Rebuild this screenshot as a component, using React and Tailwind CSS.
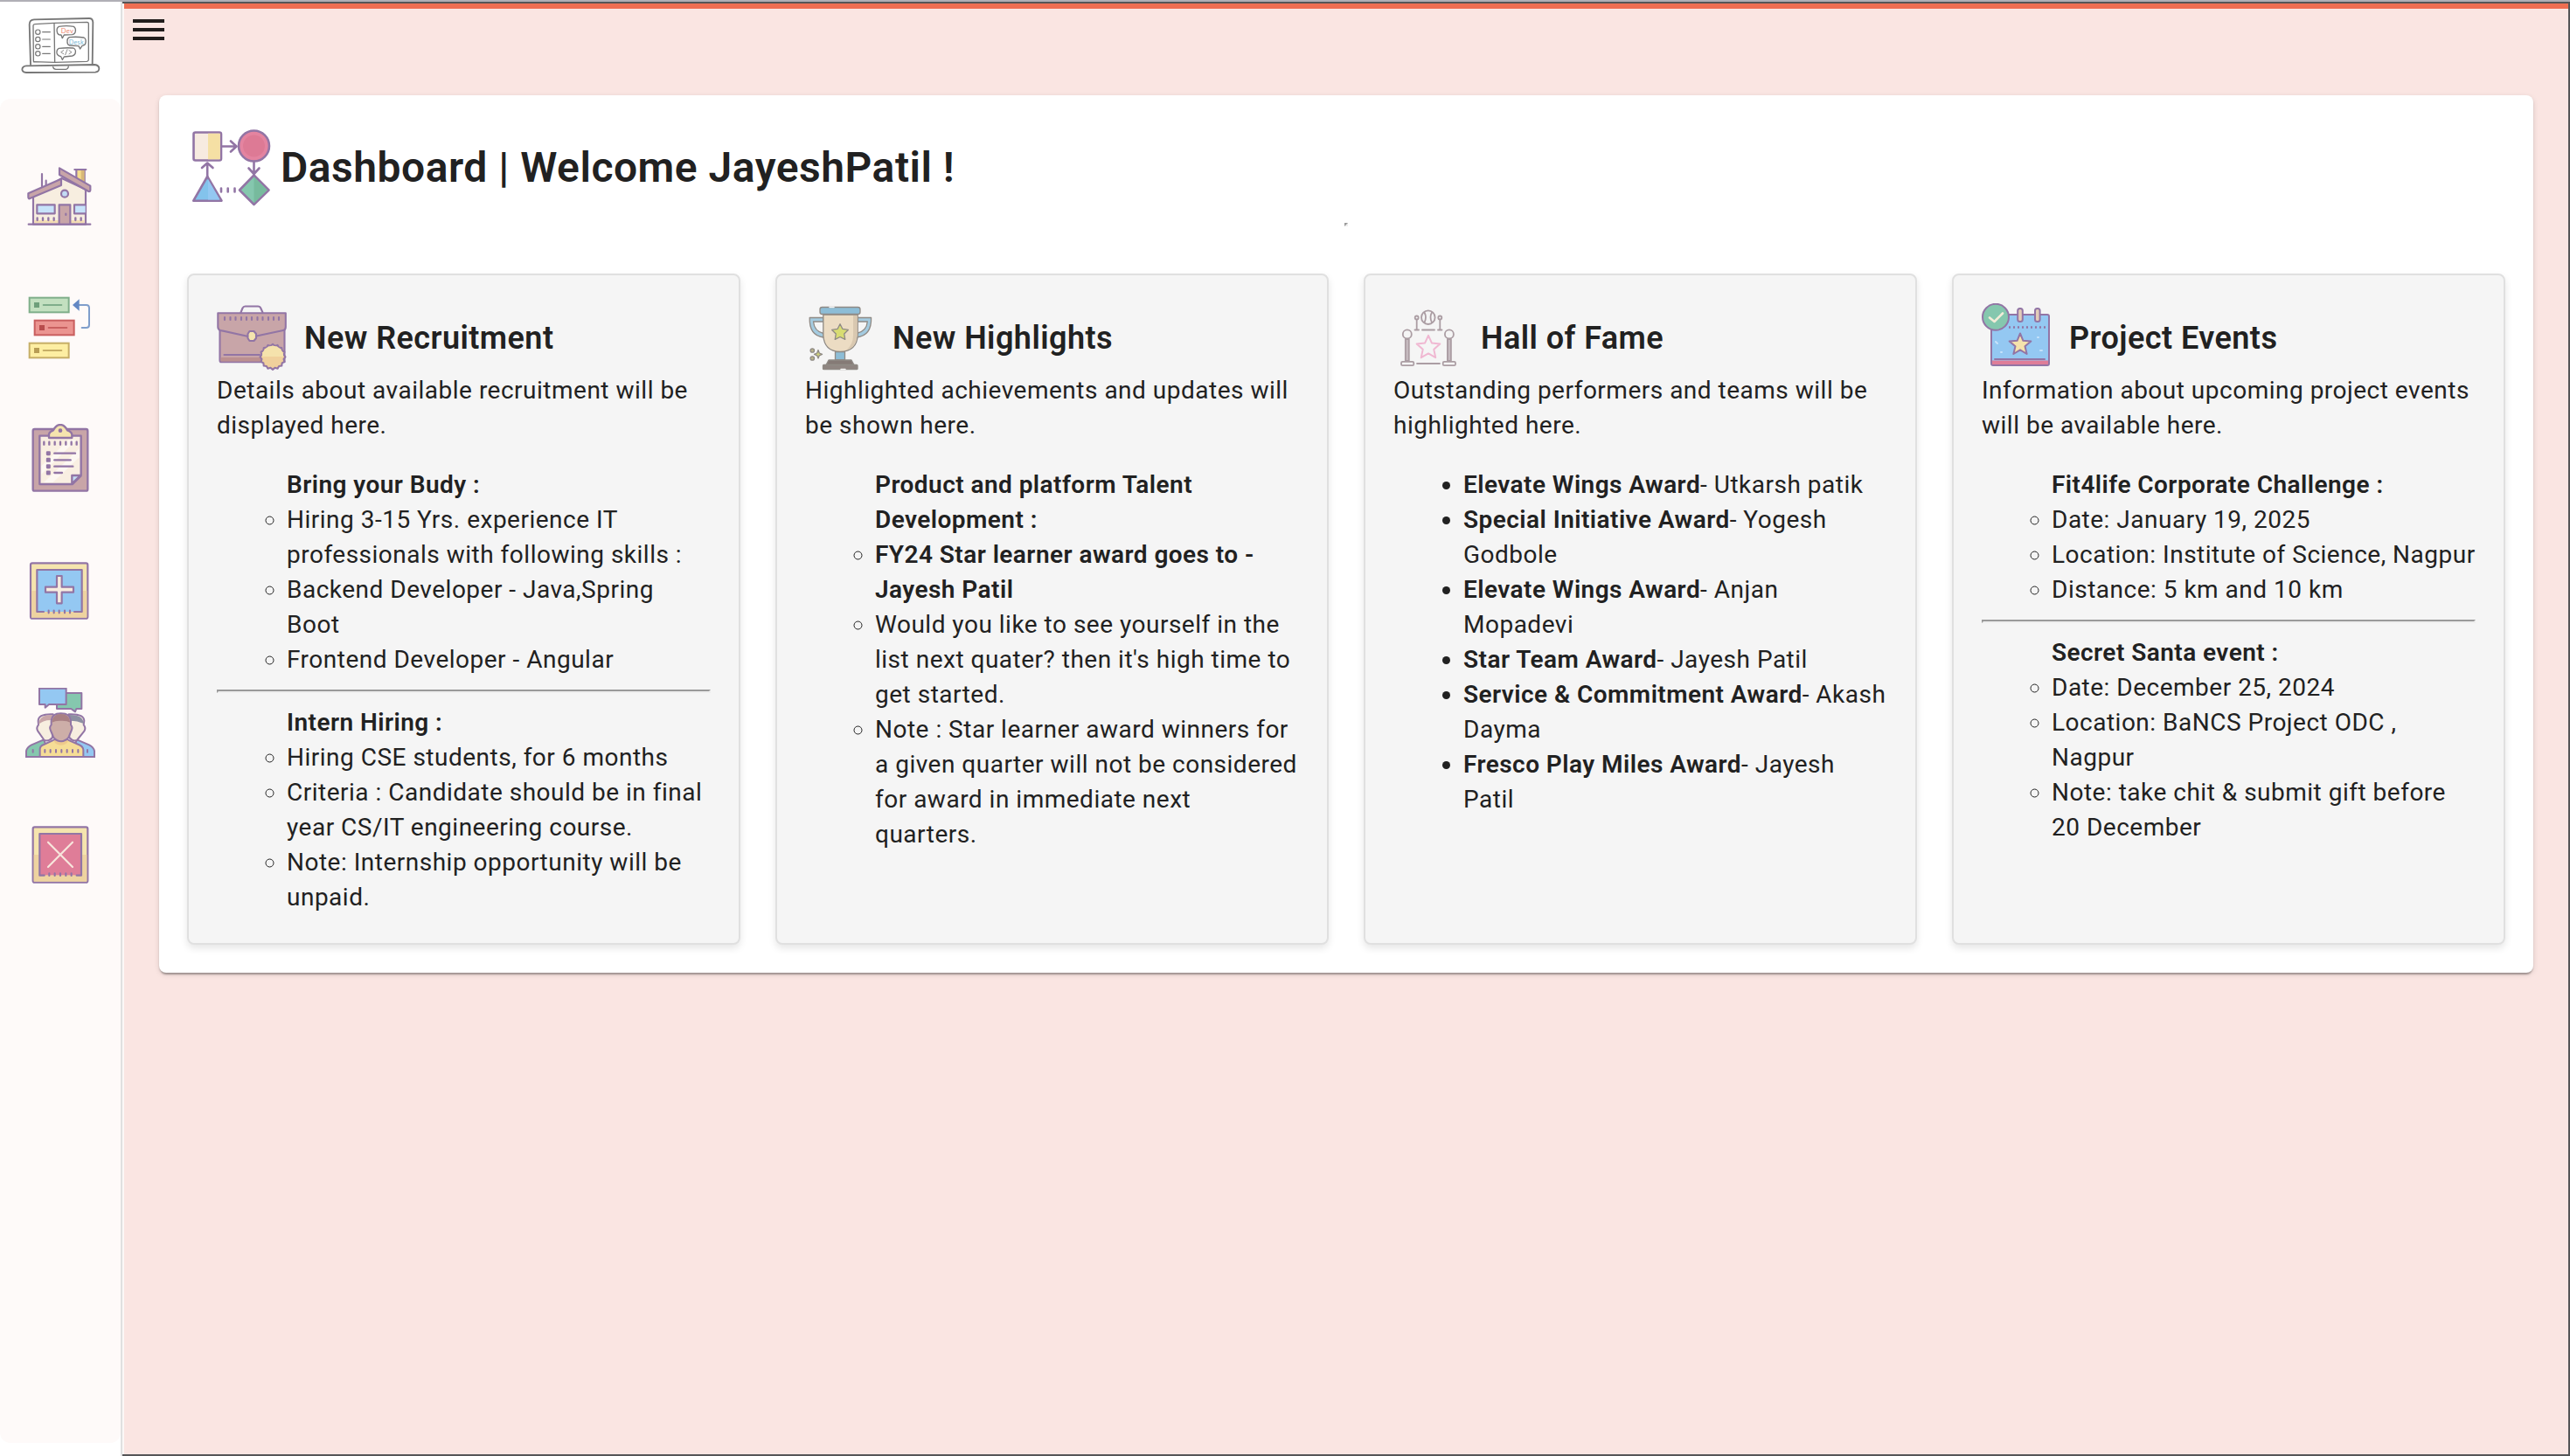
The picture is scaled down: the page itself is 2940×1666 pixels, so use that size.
import React from "react";

const P = "#9275a5";

function starPoints(cx, cy, R, r) {
  return Array.from({ length: 10 }, (_, i) => {
    const a = -Math.PI / 2 + (i * Math.PI) / 5;
    const d = i % 2 ? r : R;
    return `${(cx + d * Math.cos(a)).toFixed(2)},${(cy + d * Math.sin(a)).toFixed(2)}`;
  }).join(" ");
}

function Logo() {
  return (
    <svg viewBox="66 51 285 210" className="h-[70px] w-[95px]" fill="none" stroke="#777" strokeWidth="5.5" strokeLinejoin="round" strokeLinecap="round">
      <path d="M105 222 L101 84 Q101 68 117 67 L306 63 Q318 63 319 76 L317 222" />
      <path d="M117 212 Q115 214 115 208 L114 88 Q114 84 120 83 L186 79 L299 76 Q304 76 304 82 V205 Q304 210 298 211 L188 214 Z" strokeWidth="4" />
      <path d="M186 80 L188 213" strokeWidth="4" />
      <path d="M90 226 L325 222 Q340 224 340 235 Q340 247 327 248 L90 249 Q76 248 76 238 Q77 227 90 226 Z" />
      <path d="M182 230 Q184 238 192 238 H226 Q234 237 235 228" strokeWidth="4" />
      {[110, 135, 160, 184].map((y) => (
        <g key={y} strokeWidth="3.5">
          <circle cx="130" cy={y} r="8" />
          <path d={`M146 ${y} H172`} />
        </g>
      ))}
      <g strokeWidth="4">
        <path d="M202 91 Q228 87 253 91 Q261 97 259 108 Q257 118 248 119 L220 120 L214 131 L210 120 Q198 121 196 110 Q193 96 202 91 Z" />
        <path d="M238 128 Q262 125 288 129 Q296 133 294 146 Q293 156 282 157 L275 168 L270 158 L238 156 Q230 152 231 142 Q230 132 238 128 Z" />
        <path d="M202 166 Q228 163 252 165 Q261 170 259 180 Q258 190 248 192 L220 195 L214 205 L209 194 Q197 192 195 182 Q194 170 202 166 Z" />
        <path d="M218 173 L209 179 L218 185 M237 173 L246 179 L237 185 M231 170 L224 188" strokeWidth="2.5" />
      </g>
      <text x="209" y="114" fontSize="23" fill="#ef8a72" stroke="none" fontFamily="Lato, sans-serif" textLength="43" letterSpacing="0">Dev</text>
      <text x="236" y="152" fontSize="22" fill="#7db9d6" stroke="none" fontFamily="Lato, sans-serif" textLength="51" letterSpacing="0">Desk</text>
    </svg>
  );
}

const navCls = "block size-20";

function House() {
  return (
    <svg viewBox="87 549 240 240" className={navCls} stroke={P} strokeWidth="6.5" strokeLinejoin="round" strokeLinecap="round" fill="none">
      <path d="M144 597 V640 M158 620 V636" />
      <path d="M262 582 H290 V634 L262 614 Z" fill="#f5dc8c" />
      <path d="M278 582 H290 V632 L278 624 Z" fill="#d8b878" stroke="none" />
      <path d="M256 582 H295" />
      <path d="M114 672 L212 612 L294 650 V770 H114 Z" fill="#f7eee0" />
      <path d="M118 756 H290 V766 H118 Z" fill="#f3dcb4" stroke="none" />
      <path d="M97 664 L210 614 V636 L101 682 Q97 682 97 676 Z" fill="#c8a5a8" />
      <path d="M204 577 L310 638 V653 Q309 658 304 657 L204 600 Z" fill="#c8a5a8" />
      <circle cx="222" cy="665" r="12" fill="#c3dcf5" />
      <rect x="127" y="703" width="61" height="30" fill="#c7e3fa" />
      <path d="M293 703 H255 V733 H293" fill="#c7e3fa" />
      <path d="M203 768 V703 H241 V768" fill="#c8a5a8" />
      <path d="M226 734 V738" />
      <path d="M128 748 V756 M147 748 V756 M166 748 V756 M185 748 V756 M259 748 V756 M278 748 V756" strokeWidth="7" />
      <path d="M98 770 H310" />
    </svg>
  );
}

function TaskFlow() {
  const rows = [
    [101, 122, "#c3e0c0", "#7fae8a", "#6e9f7a"],
    [119, 200, "#eb9490", "#c95f5f", "#b84c4c"],
    [101, 278, "#fdeea2", "#c6ae66", "#b89d55"],
  ];
  return (
    <svg viewBox="87 102 240 240" className={navCls} fill="none">
      {rows.map(([x, y, f, s, d]) => (
        <g key={y}>
          <rect x={x} y={y} width="135" height="50" fill={f} stroke={s} strokeWidth="6" />
          <rect x={x + 16} y={y + 16} width="18" height="18" fill={d} />
          <path d={`M${x + 48} ${y + 25} H${x + 110}`} stroke={s} strokeWidth="6" strokeLinecap="round" />
        </g>
      ))}
      <path d="M270 147 H296 Q306 147 306 157 V215 Q306 225 296 225 H281" stroke="#7f9ecb" strokeWidth="6" strokeLinecap="round" />
      <path d="M272 127 V167 L249 147 Z" fill="#6488c4" />
    </svg>
  );
}

function Clipboard() {
  return (
    <svg viewBox="87 555 240 240" className={navCls} stroke={P} strokeWidth="7" strokeLinejoin="round" strokeLinecap="round" fill="none">
      <rect x="113" y="573" width="188" height="212" rx="6" fill="#c8a5a8" />
      <path d="M136 596 H278 V733 L249 762 H136 Z" fill="#f9efe2" />
      <path d="M142 700 L235 610 H262 L142 728 Z M150 756 L272 640 V670 L182 756 Z" fill="#fdf8f2" stroke="none" />
      <path d="M247 760 V732 H276 Z" fill="#c3dcf5" />
      <path d="M168 603 V590 Q170 582 183 577 Q192 558 207 558 Q222 558 231 577 Q246 582 247 592 V603 Z" fill="#f5e4ae" />
      <circle cx="207" cy="578" r="4.5" fill={P} strokeWidth="5" />
      <path d="M151 617 V626 M169 617 V626 M188 617 V626 M207 617 V626 M226 617 V626 M245 617 V626 M263 617 V626" strokeWidth="7" />
      {[[656, 258], [679, 242], [701, 250], [723, 213]].map(([y, x]) => (
        <g key={y}>
          <rect x="162" y={y - 4} width="8" height="8" fill={P} />
          <path d={`M187 ${y} H${x}`} />
        </g>
      ))}
    </svg>
  );
}

function AddFrame() {
  return (
    <svg viewBox="87 48 240 240" className={navCls} stroke={P} strokeWidth="6.5" strokeLinejoin="round" strokeLinecap="round" fill="none">
      <rect x="105" y="73" width="196" height="190" rx="6" fill="#f5e4ae" />
      <path d="M108 168 H298 V260 H108 Z" fill="#eed3a0" stroke="none" />
      <rect x="127" y="96" width="154" height="144" fill="#94c8f2" stroke="none" />
      <path d="M150 240 H127 V96 H281 V240 H255" />
      <path d="M167 236 V244 M185 236 V244 M203 236 V244 M222 236 V244 M240 236 V244" />
      <path d="M195 117 H212 V155 H252 V173 H212 V211 H195 V173 H156 V155 H195 Z" fill="#f7ecdf" />
    </svg>
  );
}

function RemoveFrame() {
  return (
    <svg viewBox="87 954 240 240" className={navCls} stroke={P} strokeWidth="6.5" strokeLinejoin="round" strokeLinecap="round" fill="none">
      <rect x="113" y="979" width="188" height="190" rx="6" fill="#f5e4ae" />
      <path d="M116 1074 H298 V1166 H116 Z" fill="#eed3a0" stroke="none" />
      <rect x="136" y="1002" width="143" height="142" fill="#df7d98" stroke="none" />
      <path d="M152 1145 H136 V1002 H279 V1145 H263" />
      <path d="M169 1138 V1146 M188 1138 V1146 M207 1138 V1146 M226 1138 V1146 M245 1138 V1146" />
      <path d="M165 1031 L249 1116 M249 1031 L165 1116" stroke="#f7e6dc" />
    </svg>
  );
}

function Team() {
  return (
    <svg viewBox="87 501 240 240" className={navCls} stroke={P} strokeWidth="6" strokeLinejoin="round" strokeLinecap="round" fill="none">
      <path d="M195 519 H280 V573 H262 L258 583 L244 573 H195 Z" fill="#85c7ae" />
      <path d="M135 503 H227 V558 H168 L155 569 V558 H135 Z" fill="#94c8f2" />
      <path d="M90 738 V718 Q93 704 108 697 L150 679 L175 738 Z" fill="#85c7ae" />
      <path d="M324 738 V718 Q321 704 306 697 L264 679 L240 738 Z" fill="#94c8f2" />
      <path d="M182 592 Q132 590 131 614 L132 628 Q123 638 130 650 L152 681 Q168 686 180 672 Z" fill="#f7eee0" />
      <path d="M182 594 Q134 592 133 626 Q150 610 180 612 Z" fill="#c8a5a8" stroke="none" />
      <path d="M236 592 Q288 590 289 614 L287 628 Q296 638 289 650 L264 681 Q250 686 238 672 Z" fill="#f7eee0" />
      <path d="M236 594 Q286 592 287 624 Q266 614 240 614 Z" fill="#8d8fa2" stroke="none" />
      <path d="M137 738 V712 Q137 701 150 696 L185 680 H233 L270 696 Q285 702 286 714 V738 Z" fill="#f6dd96" />
      <path d="M184 682 Q190 698 209 698 Q228 698 235 682 Z" fill="#eeca8c" stroke="none" />
      <path d="M209 589 Q178 589 176 614 V628 Q168 636 174 648 L184 672 Q196 685 210 685 Q224 684 235 672 L245 648 Q251 636 243 628 V614 Q241 589 209 589 Z" fill="#cdaea8" />
      <path d="M209 591 Q180 591 178 620 Q190 613 209 614 Q230 613 241 620 Q239 591 209 591 Z" fill="#a98084" stroke="none" />
      <path d="M113 714 V722 M154 714 V722 M173 714 V722 M192 714 V722 M211 714 V722 M230 714 V722 M249 714 V722 M268 714 V722 M300 714 V722" strokeWidth="6" />
      <path d="M89 738 H325" />
    </svg>
  );
}

function FlowChart() {
  return (
    <svg viewBox="216 144 96 96" className="size-24" stroke={P} strokeWidth="2.6" strokeLinejoin="round" strokeLinecap="round" fill="none">
      <rect x="221.500" y="151.500" width="31.500" height="32" rx="2" fill="#f7ebe0" />
      <path d="M238 152.700 H251.800 V182.300 H238 Z" fill="#f5e0a4" stroke="none" />
      <circle cx="290.500" cy="167" r="17.500" fill="#e484a0" />
      <circle cx="290.500" cy="167" r="12.500" fill="#dd7a95" stroke="none" />
      <path d="M254 167.500 H270 M264 161.500 L270.500 167.500 L264 173.500" />
      <path d="M290.500 185 V199 M284.500 192.500 L290.500 199 L296.500 192.500" />
      <path d="M237.200 202 V187 M231 192 L237.200 186.500 L243.500 192" />
      <path d="M237.200 202 L253.500 229.700 H221.300 Z" fill="#83c3ec" />
      <path d="M238 205 L251.500 228.400 H238 Z" fill="#94c8f2" stroke="none" />
      <path d="M290.500 200.500 L307.500 217.500 L290.500 234 L274 217.500 Z" fill="#85c7ae" />
      <path d="M290.500 202.200 L305.800 217.500 L290.500 232.400 Z" fill="#77ba9d" stroke="none" />
      <path d="M253 215.500 V219.500 M260.700 215.500 V219.500 M268.500 215.500 V219.500" />
    </svg>
  );
}

function Briefcase() {
  const teeth = Array.from({ length: 32 }, (_, i) => {
    const a = (i * Math.PI) / 16;
    const d = i % 2 ? 12.8 : 14.5;
    return `${(312 + d * Math.cos(a)).toFixed(2)},${(408.3 + d * Math.sin(a)).toFixed(2)}`;
  }).join(" ");
  return (
    <svg viewBox="248 347 80 80" className="size-20" stroke={P} strokeWidth="2.1" strokeLinejoin="round" strokeLinecap="round" fill="none">
      <path d="M275.500 357.500 L277.500 352.500 Q278.500 350.500 280.500 350.500 H295 Q297.500 350.500 298.200 352.500 L300.500 357.500" />
      <path d="M251.500 370 H325.500 V414.300 H253 Q251.500 414.300 251.500 412 Z" fill="#c8a5a8" />
      <path d="M252.500 409 H324 V413.400 H252.500 Z" fill="#bc9090" stroke="none" />
      <path d="M249.300 358.300 H326.800 V374 Q326.800 377.500 324 378 L291 385 H284 L252 378 Q249.300 377 249.300 374 Z" fill="#c8a5a8" />
      <path d="M257 363 V366 M263.500 363 V366 M269.500 363 V366 M276 363 V366 M282 363 V366 M288 363 V366 M294.500 363 V366 M300.500 363 V366 M307 363 V366 M313 363 V366 M319 363 V366" />
      <path d="M285.500 379 H290.500 L293 382 V387 L290.500 390 H285.500 L283.500 387 V382 Z" fill="#f5e4ae" />
      <path d="M256.500 406 H297" />
      <polygon points={teeth} fill="#f0d09c" />
      <path d="M299.800 408 A12.200 12.200 0 0 1 324.200 408 Z" fill="#f5e2ac" stroke="none" />
    </svg>
  );
}

function Trophy() {
  return (
    <svg viewBox="921 347 80 80" className="size-20" stroke="#8f8a85" strokeWidth="1.3" strokeLinejoin="round" strokeLinecap="round" fill="none">
      <path d="M942 363.500 H926.200 Q925.500 384 942 386 V381.500 Q931.500 379 930.500 368 H942 Z" fill="#a4cbe0" />
      <path d="M981 363.500 H996.600 Q997.300 384 980 386 V381.500 Q991.500 379 992.300 368 H981 Z" fill="#a4cbe0" />
      <path d="M941.800 360 H981.200 V384 Q980 402 961 402.500 Q943 402 941.800 384 Z" fill="#ecdcc3" />
      <path d="M976 361 H980.500 V384 Q979.500 397 968 401 Q976 394 976 384 Z" fill="#d9c8b0" stroke="none" />
      <rect x="938" y="351.500" width="46" height="8" rx="2.500" fill="#8dbdd6" />
      <path d="M949 351.500 H954" stroke="#f5f5f5" strokeWidth="1.500" />
      <polygon points={starPoints(961, 380.5, 9.8, 5)} fill="#d8dc72" />
      <rect x="955.500" y="402.700" width="11" height="9" fill="#8dbdd6" />
      <path d="M948 412 H974 L977 417.500 H945 Z" fill="#857a76" />
      <rect x="941.500" y="417.500" width="39.500" height="5.200" rx="1" fill="#8f8581" />
      <path d="M962 422.600 H967" stroke="#f5f5f5" strokeWidth="1.500" />
      <circle cx="929.300" cy="401" r="2.200" fill="#b9b58a" />
      <circle cx="929.300" cy="410" r="2.200" fill="#b9b58a" />
      <path d="M936 400.500 L937.300 404 L940.500 405.400 L937.300 406.800 L936 410 L934.700 406.800 L931.500 405.400 L934.700 404 Z" fill="#cdd07c" />
    </svg>
  );
}

function HallOfFameIcon() {
  return (
    <svg viewBox="1594 347 80 80" className="size-20" stroke="#ab9da3" strokeWidth="1.8" strokeLinejoin="round" strokeLinecap="round" fill="none">
      <circle cx="1633.800" cy="363.200" r="7.800" />
      <path d="M1629.500 357.500 Q1632.500 363 1629.500 369 M1638 357.500 Q1635 363 1638 369" />
      <circle cx="1620.700" cy="363.500" r="2" />
      <circle cx="1647.300" cy="363.500" r="2" />
      <path d="M1620.700 366 V377 M1647.300 366 V377 M1618.500 377.500 H1623 M1645 377.500 H1649.500 M1627 377.500 H1641" />
      <circle cx="1609.800" cy="382.400" r="5" />
      <circle cx="1657.900" cy="382.400" r="5" />
      <rect x="1607.800" y="388" width="4" height="25" fill="#c6bbc0" />
      <rect x="1655.900" y="388" width="4" height="25" fill="#c6bbc0" />
      <rect x="1603" y="413.800" width="14.300" height="4.400" rx="1.500" />
      <rect x="1650.700" y="413.800" width="14.300" height="4.400" rx="1.500" />
      <path d="M1621 416 H1647" />
      <polygon points={starPoints(1634, 397.8, 14, 6.6)} stroke="#f0b8d2" strokeWidth="2" />
    </svg>
  );
}

function CalendarIcon() {
  return (
    <svg viewBox="2267 347 80 80" className="size-20" stroke={P} strokeWidth="2" strokeLinejoin="round" strokeLinecap="round" fill="none">
      <rect x="2278" y="360" width="66" height="58" rx="2" fill="#94c8f2" />
      <path d="M2279 412.500 H2343 V417 H2279 Z" fill="#df7d98" stroke="none" />
      <path d="M2282 411 H2339" />
      <path d="M2299 374 V375 M2304 374 V375 M2309 374 V375 M2314 374 V375 M2319 374 V375 M2324 374 V375 M2329 374 V375 M2334 374 V375 M2339 374 V375" />
      <rect x="2308.200" y="353" width="5.600" height="15" rx="2.500" fill="#e3cdb9" />
      <rect x="2328" y="353" width="5.600" height="15" rx="2.500" fill="#e3cdb9" />
      <polygon points={starPoints(2311, 394.5, 13, 5.8)} fill="#f5e2ac" />
      <path d="M2283 391 L2285 393 M2331 386 H2332 M2334 401 H2336 M2289 403 H2290" stroke="#c7e3fa" />
      <circle cx="2283" cy="362.800" r="15" fill="#85c7ae" />
      <path d="M2276 363.500 L2281.500 368 L2291 358.500" stroke="#f3ecd8" strokeWidth="2.600" />
    </svg>
  );
}

const B = ({ children }) => <b className="font-semibold tracking-[0.45px]">{children}</b>;

const circle = "list-[circle] pl-20";

function Divider() {
  return <hr className="my-3.5 h-1 border-2 border-t-[#9a9a9a] border-r-[#eeeeee] border-b-[#eeeeee] border-l-[#9a9a9a]" />;
}

function Card({ icon, title, text, children }) {
  return (
    <section className="rounded-lg border-2 border-[#e0e0e0] bg-[#f5f5f5] p-8 shadow-[0_4px_8px_rgba(0,0,0,0.1)]">
      <div className="flex h-20 items-center gap-5">
        {icon}
        <h2 className="text-[36px] leading-[42px] font-semibold tracking-[0.45px]">{title}</h2>
      </div>
      <p className="mb-7">{text}</p>
      {children}
    </section>
  );
}

export default function App() {
  return (
    <div className="flex h-[1666px] w-[2940px] flex-col overflow-hidden bg-white font-['Roboto',sans-serif] text-[28px] leading-10 tracking-[0.5px] text-[#212121]">
      <div className="h-0.5 shrink-0 bg-[#b0afb6]" />
      <div className="flex min-h-0 flex-1">
        <aside className="flex w-[140px] shrink-0 flex-col border-r-2 border-[#e0e0e0] bg-white pb-[15px]">
          <div className="flex h-[111px] shrink-0 justify-center pt-[15px]">
            <Logo />
          </div>
          <nav className="flex flex-1 flex-col items-center gap-[71px] rounded-xl bg-[#fefaf9] pt-[70px]">
            <House />
            <TaskFlow />
            <Clipboard />
            <AddFrame />
            <Team />
            <RemoveFrame />
          </nav>
        </aside>

        <div className="min-w-0 flex-1 border-y-2 border-r-2 border-[#555557] bg-[#fbf7f6] pl-0.5">
          <main className="h-full border-t-[6px] border-[#ee6e52] bg-[#fae5e2] pr-10 pl-10">
            <div className="-ml-[30px] flex h-[99px] flex-col gap-1.5 pt-3">
              <span className="h-1 w-9 bg-[#211d1c]" />
              <span className="h-1 w-9 bg-[#211d1c]" />
              <span className="h-1 w-9 bg-[#211d1c]" />
            </div>

            <div className="rounded-lg bg-white p-8 shadow-[0_4px_2px_-2px_rgba(0,0,0,0.2),0_2px_2px_0_rgba(0,0,0,0.14),0_2px_6px_0_rgba(0,0,0,0.12)]">
              <div className="flex h-[114px] items-start gap-[9px] pt-[3px] pl-0.5">
                <FlowChart />
                <h1 className="pt-5 text-[48px] leading-[56px] font-semibold tracking-[0.5px]">
                  Dashboard | Welcome JayeshPatil !
                </h1>
              </div>
              <hr className="mx-auto mb-[54px] size-1 border-2 border-t-[#9a9a9a] border-r-[#eeeeee] border-b-[#eeeeee] border-l-[#9a9a9a]" />

              <div className="grid grid-cols-4 gap-10">
                <Card icon={<Briefcase />} title="New Recruitment" text="Details about available recruitment will be displayed here.">
                  <ul className={circle}>
                    <div><B>Bring your Budy :</B></div>
                    <li>Hiring 3-15 Yrs. experience IT professionals with following skills :</li>
                    <li>Backend Developer - Java,Spring Boot</li>
                    <li>Frontend Developer - Angular</li>
                  </ul>
                  <Divider />
                  <ul className={circle}>
                    <div><B>Intern Hiring :</B></div>
                    <li>Hiring CSE students, for 6 months</li>
                    <li>Criteria : Candidate should be in final year CS/IT engineering course.</li>
                    <li>Note: Internship opportunity will be unpaid.</li>
                  </ul>
                </Card>

                <Card icon={<Trophy />} title="New Highlights" text="Highlighted achievements and updates will be shown here.">
                  <ul className={circle}>
                    <div><B>Product and platform Talent Development :</B></div>
                    <li><B>FY24 Star learner award goes to - Jayesh Patil</B></li>
                    <li>Would you like to see yourself in the list next quater? then it's high time to get started.</li>
                    <li>Note : Star learner award winners for a given quarter will not be considered for award in immediate next quarters.</li>
                  </ul>
                </Card>

                <Card icon={<HallOfFameIcon />} title="Hall of Fame" text="Outstanding performers and teams will be highlighted here.">
                  <ul className="list-disc pl-20">
                    <li><B>Elevate Wings Award</B>- Utkarsh patik</li>
                    <li><B>Special Initiative Award</B>- Yogesh Godbole</li>
                    <li><B>Elevate Wings Award</B>- Anjan Mopadevi</li>
                    <li><B>Star Team Award</B>- Jayesh Patil</li>
                    <li><B>Service &amp; Commitment Award</B>- Akash Dayma</li>
                    <li><B>Fresco Play Miles Award</B>- Jayesh Patil</li>
                  </ul>
                </Card>

                <Card icon={<CalendarIcon />} title="Project Events" text="Information about upcoming project events will be available here.">
                  <ul className={circle}>
                    <div><B>Fit4life Corporate Challenge :</B></div>
                    <li>Date: January 19, 2025</li>
                    <li>Location: Institute of Science, Nagpur</li>
                    <li>Distance: 5 km and 10 km</li>
                  </ul>
                  <Divider />
                  <ul className={circle}>
                    <div><B>Secret Santa event :</B></div>
                    <li>Date: December 25, 2024</li>
                    <li>Location: BaNCS Project ODC , Nagpur</li>
                    <li>Note: take chit &amp; submit gift before 20 December</li>
                  </ul>
                </Card>
              </div>
            </div>
          </main>
        </div>
      </div>
    </div>
  );
}
